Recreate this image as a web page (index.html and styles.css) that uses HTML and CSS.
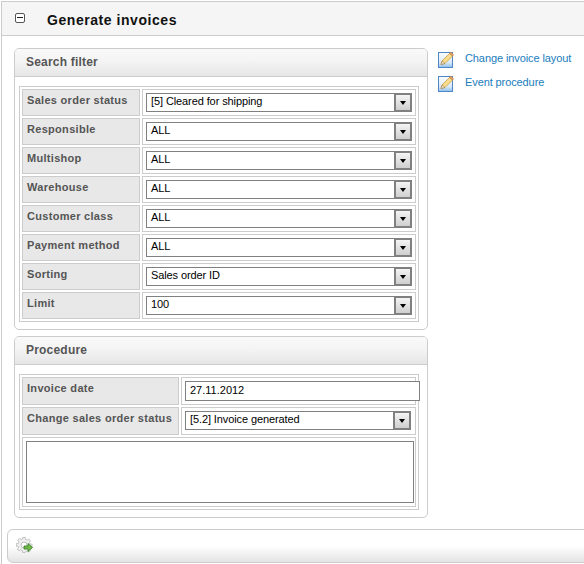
FILE: index.html
```html
<!DOCTYPE html>
<html lang="en">

<head>
  <meta charset="UTF-8">
  <title>Generate invoices</title>
  <link rel="stylesheet" href="styles.css">
</head>

<body>
  <svg class="defs" width="0" height="0">
    <defs>
      <linearGradient id="paper" x1="0" y1="0" x2="0" y2="1">
        <stop offset="0" stop-color="#fbfdff" />
        <stop offset="0.65" stop-color="#dcebf9" />
        <stop offset="1" stop-color="#8fc0ea" />
      </linearGradient>
      <symbol id="edit" viewBox="0 0 16 17">
        <rect x="0.5" y="1.5" width="14" height="15" fill="url(#paper)" stroke="#4f86c6" />
        <path d="M3 13.500l1-3.500L11.500 2.500 14.500 5 7 12.500z" fill="#f9dc8c" stroke="#cf9a45" stroke-width="0.8" />
        <path d="M11.500 2.500l3 2.500 1-1.300-2.600-2.600z" fill="#e8a070" stroke="#b9803c" stroke-width="0.6" />
        <path d="M3 13.500l1-3.500 3 2.500z" fill="#f3e6cc" stroke="#8a6a3a" stroke-width="0.5" />
      </symbol>
    </defs>
  </svg>

  <div class="page">
    <div class="page-header">
      <span class="toggle"></span>
      <h1>Generate invoices</h1>
    </div>

    <div class="content">
      <div class="panels">
        <div class="panel">
          <h2>Search filter</h2>
          <table class="form filter">
            <tr>
              <th>Sales order status</th>
              <td><div class="select">[5] Cleared for shipping<span class="arrow"></span></div></td>
            </tr>
            <tr>
              <th>Responsible</th>
              <td><div class="select">ALL<span class="arrow"></span></div></td>
            </tr>
            <tr>
              <th>Multishop</th>
              <td><div class="select">ALL<span class="arrow"></span></div></td>
            </tr>
            <tr>
              <th>Warehouse</th>
              <td><div class="select">ALL<span class="arrow"></span></div></td>
            </tr>
            <tr>
              <th>Customer class</th>
              <td><div class="select">ALL<span class="arrow"></span></div></td>
            </tr>
            <tr>
              <th>Payment method</th>
              <td><div class="select">ALL<span class="arrow"></span></div></td>
            </tr>
            <tr>
              <th>Sorting</th>
              <td><div class="select">Sales order ID<span class="arrow"></span></div></td>
            </tr>
            <tr>
              <th>Limit</th>
              <td><div class="select">100<span class="arrow"></span></div></td>
            </tr>
          </table>
        </div>

        <div class="panel">
          <h2>Procedure</h2>
          <table class="form procedure">
            <tr>
              <th>Invoice date</th>
              <td><input class="date" type="text" value="27.11.2012"></td>
            </tr>
            <tr>
              <th>Change sales order status</th>
              <td class="status"><div class="select">[5.2] Invoice generated<span class="arrow"></span></div></td>
            </tr>
            <tr>
              <td colspan="2"><textarea class="note"></textarea></td>
            </tr>
          </table>
        </div>
      </div>

      <div class="links">
        <a href="#"><svg class="icon"><use href="#edit" /></svg>Change invoice layout</a>
        <a href="#"><svg class="icon"><use href="#edit" /></svg>Event procedure</a>
      </div>
    </div>

    <div class="footer">
      <svg class="run" width="17" height="17" viewBox="0 0 17 17">
        <path d="M7 0h3l.4 2.300 1.700.7 1.900-1.300 2 2-1.300 1.900.7 1.700 2.300.4v3l-2.300.4-.7 1.700 1.300 1.900-2 2-1.900-1.300-1.700.7L10 17H7l-.4-2.300-1.700-.7-1.900 1.300-2-2 1.300-1.900-.7-1.700L-.3 10V7l2.300-.4.7-1.700-1.300-1.900 2-2 1.900 1.300 1.700-.7z" transform="translate(0.500 0.500) scale(0.88)" fill="#efefef" stroke="#b4b4b4" stroke-width="0.9" />
        <circle cx="8" cy="8" r="3" fill="#fff" stroke="#b0b0b0" stroke-width="0.8" />
        <path d="M8 9h4V6.500l4.500 4-4.500 4V12H8z" fill="#74b84a" stroke="#2f7d1f" stroke-width="0.8" />
      </svg>
    </div>
  </div>
</body>

</html>
```

FILE: styles.css
```css
/* Page frame */
body {
  margin: 0;
  font-family: "Liberation Sans", Arial, sans-serif;
  font-size: 11px;
  color: #000;
  background-color: #fff;
}

.defs {
  position: absolute;
}

.page {
  margin: 1px 0 0 1px;
  height: 563px;
  box-sizing: border-box;
  border-left: 1px solid #ccc;
  border-top: 1px solid #ccc;
  overflow: hidden;
}

.page-header {
  display: flex;
  align-items: center;
  height: 33px;
  background-color: #f5f5f5;
  border-bottom: 1px solid #ccc;
}

.toggle {
  position: relative;
  box-sizing: border-box;
  width: 10px;
  height: 10px;
  margin: -1px 0 0 13px;
  border: 1px solid #555;
  border-radius: 2px;
  background-color: #fff;
}

.toggle::after {
  content: "";
  position: absolute;
  left: 1px;
  top: 3px;
  width: 6px;
  height: 1px;
  background-color: #222;
}

h1 {
  margin: 2px 0 0 22px;
  font-size: 14px;
  letter-spacing: 0.55px;
  color: #111;
}

/* Main area */
.content {
  display: flex;
  padding: 12px 0 0 12px;
}

.panels {
  display: flex;
  flex-direction: column;
  gap: 6px;
  width: 414px;
}

.panel {
  box-sizing: border-box;
  padding-bottom: 7px;
  border: 1px solid #ccc;
  border-radius: 5px;
}

.panel h2 {
  height: 27px;
  margin: 0 0 9px;
  padding-left: 11px;
  font-size: 12px;
  line-height: 27px;
  letter-spacing: 0.2px;
  color: #555;
  border-bottom: 1px solid #ccc;
  border-radius: 4px 4px 0 0;
  background: linear-gradient(#f9f9f9, #f4f4f4 45%, #e6e6e6);
}

/* Form tables */
table.form {
  width: 400px;
  margin-left: 4px;
  table-layout: fixed;
  border-collapse: separate;
  border-spacing: 2px;
  border: 1px solid #ccc;
}

table.form th,
table.form td {
  box-sizing: border-box;
  padding: 3px;
  border: 1px solid #ccc;
  vertical-align: top;
}

table.form th {
  padding: 4px 0 0 4px;
  text-align: left;
  font-size: 11px;
  letter-spacing: 0.3px;
  color: #555;
  background-color: #e8e8e8;
}

table.filter th {
  width: 118px;
}

table.procedure th {
  width: 157px;
}

table.form td.status {
  padding-bottom: 4px;
}

.select {
  position: relative;
  box-sizing: border-box;
  height: 19px;
  width: 266px;
  padding-left: 4px;
  border: 2px solid #808080;
  border-width: 1px 2px 1px 1px;
  line-height: 15px;
  letter-spacing: -0.1px;
  background-color: #fff;
  white-space: nowrap;
}

table.procedure .select {
  width: 226px;
}

.arrow {
  position: absolute;
  top: 0;
  right: 0;
  width: 14px;
  height: 15px;
  border-left: 2px solid #808080;
  border-top: 1px solid #808080;
  border-bottom: 1px solid #808080;
  background: linear-gradient(#f4f4f4, #cfcfcf);
}

.arrow::after {
  content: "";
  position: absolute;
  left: 3.500px;
  top: 6px;
  border-style: solid;
  border-width: 4px 3.500px 0;
  border-color: #000 transparent transparent;
}

.date {
  display: block;
  box-sizing: border-box;
  width: 235px;
  height: 20px;
  margin: 0;
  padding: 0 4px 2px;
  border: 1px solid #808080;
  font-family: inherit;
  font-size: 11px;
}

.note {
  display: block;
  box-sizing: border-box;
  width: 388px;
  height: 62px;
  margin: 0;
  border: 1px solid #808080;
  resize: none;
}

/* Side links */
.links {
  display: flex;
  flex-direction: column;
  gap: 7px;
  margin: 3px 0 0 10px;
}

.links a {
  display: flex;
  align-items: flex-start;
  height: 17px;
  line-height: 15px;
  color: #1a7dbd;
  text-decoration: none;
  white-space: nowrap;
  letter-spacing: -0.1px;
}

.icon {
  flex: none;
  width: 16px;
  height: 17px;
  margin-right: 11px;
}

/* Bottom toolbar */
.footer {
  box-sizing: border-box;
  width: 600px;
  height: 34px;
  margin: 11px 0 0 5px;
  padding: 7px 0 0 8px;
  border: 1px solid #ccc;
  border-radius: 6px;
  background: linear-gradient(#fff, #fff 50%, #e4e4e4);
}

.run {
  display: block;
}
```
